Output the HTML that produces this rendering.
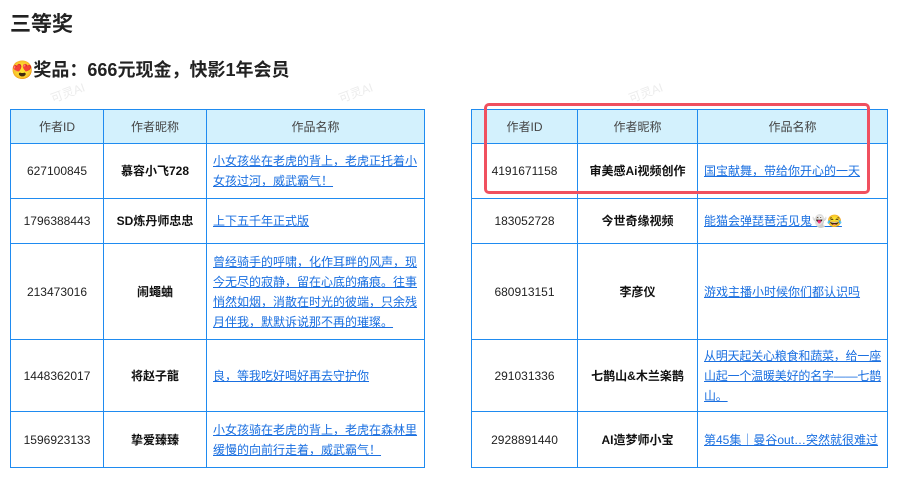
<!DOCTYPE html>
<html><head><meta charset="utf-8"><style>
body{margin:0;width:899px;height:488px;background:#fff;font-family:"Liberation Sans","Noto Sans CJK SC",sans-serif;color:#222;position:relative;overflow:hidden}
h1{position:absolute;left:10px;top:8px;margin:0;font-size:21px;font-weight:bold;color:#222}
h2{position:absolute;left:11px;top:56px;margin:0;font-size:18px;font-weight:bold;color:#222}
table{position:absolute;top:109px;border-collapse:collapse;font-size:12px;table-layout:fixed}
td,th{border:1px solid #1f8bf0;text-align:center;padding:0 6px;line-height:20px}
th{background:#d3f1fd;font-weight:normal;color:#444;height:33px}
td.n{font-weight:bold;color:#111}
td.l{text-align:left;padding:0 5px 0 6px}
a{color:#1a6fe0;text-decoration:underline}
.nw{white-space:nowrap;display:block;letter-spacing:-0.2px}
.box{position:absolute;left:484px;top:103px;width:380px;height:85px;border:3px solid #f0505f;border-radius:5px}
.wm{position:absolute;color:#ececec;font-size:12px;transform:rotate(-20deg)}
</style></head><body>
<h1>三等奖</h1>
<h2>😍奖品：666元现金，快影1年会员</h2>
<span class="wm" style="left:50px;top:84px">可灵AI</span>
<span class="wm" style="left:338px;top:84px">可灵AI</span>
<span class="wm" style="left:628px;top:84px">可灵AI</span>
<table style="left:10px;width:414px">
<col style="width:93px"><col style="width:103px"><col style="width:218px">
<tr><th>作者ID</th><th>作者昵称</th><th>作品名称</th></tr>
<tr style="height:55px"><td>627100845</td><td class="n">慕容小飞728</td><td class="l"><a>小女孩坐在老虎的背上，老虎正托着小女孩过河，威武霸气！</a></td></tr>
<tr style="height:45px"><td>1796388443</td><td class="n">SD炼丹师忠忠</td><td class="l"><a>上下五千年正式版</a></td></tr>
<tr style="height:96px"><td>213473016</td><td class="n">闹蠅蛐</td><td class="l"><a>曾经骑手的呼啸，化作耳畔的风声，现今无尽的寂静，留在心底的痛痕。往事悄然如烟，消散在时光的彼端，只余残月伴我，默默诉说那不再的璀璨。</a></td></tr>
<tr style="height:72px"><td>1448362017</td><td class="n">将赵子龍</td><td class="l"><a>良，等我吃好喝好再去守护你</a></td></tr>
<tr style="height:56px"><td>1596923133</td><td class="n">挚爱臻臻</td><td class="l"><a>小女孩骑在老虎的背上，老虎在森林里缓慢的向前行走着，威武霸气！</a></td></tr>
</table>
<table style="left:471px;width:416px">
<col style="width:106px"><col style="width:120px"><col style="width:190px">
<tr><th>作者ID</th><th>作者昵称</th><th>作品名称</th></tr>
<tr style="height:55px"><td>4191671158</td><td class="n">审美感Ai视频创作</td><td class="l"><a>国宝献舞，带给你开心的一天</a></td></tr>
<tr style="height:45px"><td>183052728</td><td class="n">今世奇缘视频</td><td class="l"><a>能猫会弹琵琶活见鬼👻😂</a></td></tr>
<tr style="height:96px"><td>680913151</td><td class="n">李彦仪</td><td class="l"><a>游戏主播小时候你们都认识吗</a></td></tr>
<tr style="height:72px"><td>291031336</td><td class="n">七鹊山&amp;木兰楽鹊</td><td class="l" style="padding-right:0"><span class="nw"><a>从明天起关心粮食和蔬菜，给一座</a></span><span class="nw"><a>山起一个温暖美好的名字——七鹊</a></span><span class="nw"><a>山。</a></span></td></tr>
<tr style="height:56px"><td>2928891440</td><td class="n">AI造梦师小宝</td><td class="l"><a>第45集｜曼谷out…突然就很难过</a></td></tr>
</table>
<div class="box"></div>
</body></html>
